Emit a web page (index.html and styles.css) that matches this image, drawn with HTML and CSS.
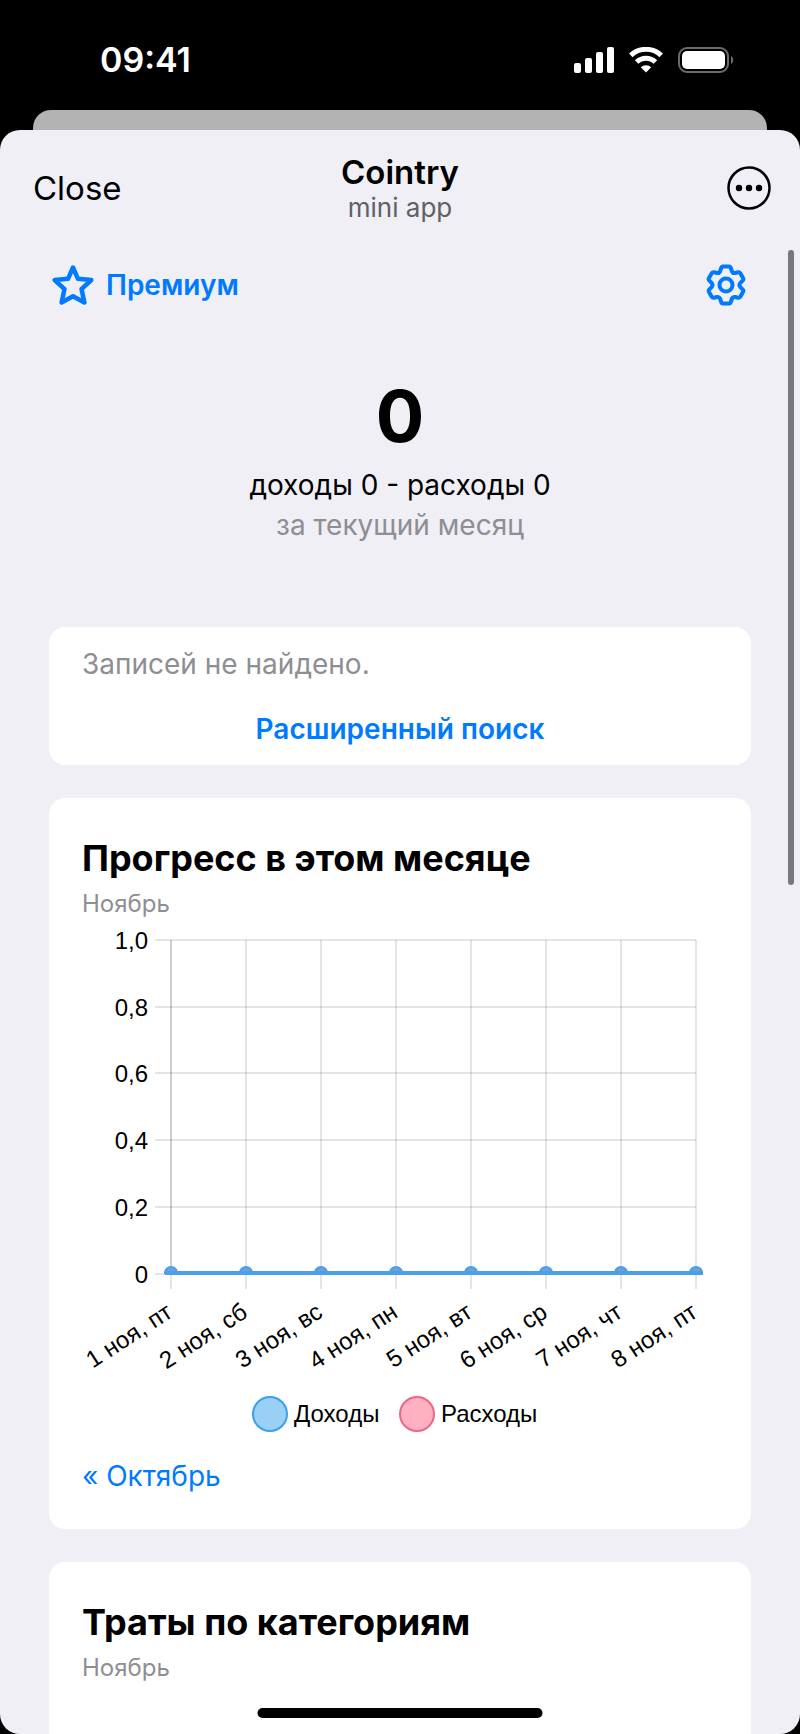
FILE: index.html
```html
<!DOCTYPE html>
<html lang="ru">
<head>
  <meta charset="UTF-8" />
  <meta name="viewport" content="width=device-width, initial-scale=1.0"/>
  <title>Cointry</title>
  <link rel="stylesheet" href="styles.css">
</head>
<body>

  <div class="status-bar">
    <span class="clock">09:41</span>
    <div class="status-icons">
      <svg width="40" height="26" viewBox="0 0 40 26" fill="#fff">
        <rect x="0" y="16" width="7" height="10" rx="2"/>
        <rect x="11" y="11" width="7" height="15" rx="2"/>
        <rect x="22" y="5" width="7" height="21" rx="2"/>
        <rect x="33" y="0" width="7" height="26" rx="2"/>
      </svg>
      <svg width="34" height="26" viewBox="0 0 34 26" fill="none" stroke="#fff" stroke-width="5">
        <path d="M1.8 8.4a22 22 0 0 1 30.4 0"/>
        <path d="M7.6 15a13.4 13.4 0 0 1 18.8 0"/>
        <path d="M17 25.5l-5.200-5.300a7.600 7.600 0 0 1 10.400 0z" fill="#fff" stroke="none"/>
      </svg>
      <svg width="56" height="26" viewBox="0 0 56 26">
        <rect x="1" y="1" width="49" height="24" rx="8" fill="none" stroke="#6b6b6b" stroke-width="2"/>
        <rect x="4" y="4" width="43" height="18" rx="5" fill="#fff"/>
        <path d="M53 9c3 1.500 3 6.500 0 8z" fill="#6b6b6b"/>
      </svg>
    </div>
  </div>

  <div class="back-sheet"></div>

  <div class="sheet">
    <header class="app-header">
      <button class="close-button" type="button">Close</button>
      <div class="app-title">
        <h1>Cointry</h1>
        <p>mini app</p>
      </div>
      <button class="more-button" type="button" aria-label="More">
        <svg width="44" height="44" viewBox="0 0 44 44">
          <circle cx="22" cy="22" r="20.500" fill="none" stroke="#000" stroke-width="2.500"/>
          <circle cx="12" cy="22" r="3.200"/>
          <circle cx="22" cy="22" r="3.200"/>
          <circle cx="32" cy="22" r="3.200"/>
        </svg>
      </button>
    </header>

    <main class="content">
      <div class="toolbar">
        <a class="premium" href="#premium">
          <svg width="42" height="42" viewBox="0 0 42 42" fill="none" stroke="currentColor" stroke-width="4.500" stroke-linejoin="round">
            <path d="M21 3.500l5 11.300 13.300 1.200-9.800 9.100 2.900 13.400L21 32.200 9.600 38.500l2.900-13.400L2.700 16 16 14.800z"/>
          </svg>
          Премиум
        </a>
        <button class="settings-button" type="button" aria-label="Настройки">
          <svg width="40" height="42" viewBox="0 0 40 42" fill="none" stroke="currentColor" stroke-width="4" stroke-linejoin="round">
            <path d="M15 4.500Q15.500 2.500 17 2.500h6Q24.500 2.500 25 4.500l1 3q1 2 3 1.500l3-.8q1.500-.3 2.300 1l2.700 4.800q.8 1.300-.2 2.400l-2.600 2.700q-1.400 1.900 0 3.800l2.600 2.700q1 1.100.2 2.400l-2.700 4.800q-.8 1.300-2.300 1l-3-.8q-2-.5-3 1.500l-1 3q-.5 2-2 2h-6q-1.500 0-2-2l-1-3q-1-2-3-1.500l-3 .8q-1.500.3-2.300-1l-2.700-4.800q-.8-1.300.2-2.400l2.600-2.700q1.400-1.900 0-3.800l-2.600-2.700q-1-1.100-.2-2.400l2.700-4.800q.8-1.300 2.300-1l3 .8q2 .5 3-1.500z"/>
            <circle cx="20" cy="21" r="6.500"/>
          </svg>
        </button>
      </div>

      <section class="balance">
        <div class="balance-total">0</div>
        <p>доходы 0 - расходы 0</p>
        <p class="muted">за текущий месяц</p>
      </section>

      <section class="card search-card">
        <p class="muted">Записей не найдено.</p>
        <a class="search-link" href="#search">Расширенный поиск</a>
      </section>

      <section class="card">
        <h2>Прогресс в этом месяце</h2>
        <p class="month">Ноябрь</p>
        <svg class="chart" viewBox="0 0 636 516" role="img" aria-label="Доходы и расходы по дням">
          <g class="grid">
            <path d="M73 16H614M73 83H614M73 149H614M73 216H614M73 283H614M73 350H614"/>
            <path d="M89 16V365M164 16V365M239 16V365M314 16V365M389 16V365M464 16V365M539 16V365M614 16V365"/>
            <path d="M89 16V350"/>
          </g>
          <g class="points">
            <path d="M83 349a6 6 0 0 1 12 0zM158 349a6 6 0 0 1 12 0zM233 349a6 6 0 0 1 12 0zM308 349a6 6 0 0 1 12 0zM383 349a6 6 0 0 1 12 0zM458 349a6 6 0 0 1 12 0zM533 349a6 6 0 0 1 12 0zM608 349a6 6 0 0 1 12 0z"/>
          </g>
          <path class="line" d="M83 349H621"/>
          <g class="labels-y">
            <text x="66" y="25">1,0</text>
            <text x="66" y="92">0,8</text>
            <text x="66" y="158">0,6</text>
            <text x="66" y="225">0,4</text>
            <text x="66" y="292">0,2</text>
            <text x="66" y="359">0</text>
          </g>
          <g class="labels-x">
            <text transform="translate(92 392) rotate(-33)">1 ноя, пт</text>
            <text transform="translate(167 392) rotate(-33)">2 ноя, сб</text>
            <text transform="translate(242 392) rotate(-33)">3 ноя, вс</text>
            <text transform="translate(317 392) rotate(-33)">4 ноя, пн</text>
            <text transform="translate(392 392) rotate(-33)">5 ноя, вт</text>
            <text transform="translate(467 392) rotate(-33)">6 ноя, ср</text>
            <text transform="translate(542 392) rotate(-33)">7 ноя, чт</text>
            <text transform="translate(617 392) rotate(-33)">8 ноя, пт</text>
          </g>
          <g class="legend">
            <circle class="income" cx="188" cy="490" r="17"/>
            <text x="212" y="498">Доходы</text>
            <circle class="expense" cx="335" cy="490" r="17"/>
            <text x="359" y="498">Расходы</text>
          </g>
        </svg>
        <a class="prev-month" href="#october">« Октябрь</a>
      </section>

      <section class="card last-card">
        <h2>Траты по категориям</h2>
        <p class="month">Ноябрь</p>
      </section>
    </main>

    <div class="scrollbar"></div>
    <div class="home-indicator"></div>
  </div>

</body>
</html>
```
FILE: styles.css
```css
* {
  box-sizing: border-box;
}

body {
  font-family: Inter, 'Liberation Sans', sans-serif;
  font-size: 28px;
  line-height: 40px;
  margin: 0;
  min-height: 100vh;
  display: flex;
  flex-direction: column;
  background-color: #000;
  color: #000;
}

h1, h2, p {
  margin: 0;
}

a {
  color: #007aff;
  text-decoration: none;
}

button {
  padding: 0;
  border: none;
  background: none;
  font: inherit;
  color: inherit;
  cursor: pointer;
}

svg {
  display: block;
}

.status-bar {
  display: flex;
  justify-content: space-between;
  align-items: center;
  height: 110px;
  padding: 10px 66px 0 100px;
  color: #fff;
}

.clock {
  font-size: 34px;
  font-weight: 600;
}

.status-icons {
  display: flex;
  gap: 15px;
}

.back-sheet {
  height: 20px;
  margin: 0 33px;
  border-radius: 18px 18px 0 0;
  background-color: #b4b3b3;
}

.sheet {
  position: relative;
  flex: 1;
  display: flex;
  flex-direction: column;
  border-radius: 20px;
  background-color: #efeff5;
}

.app-header {
  display: grid;
  grid-template-columns: 1fr auto 1fr;
  align-items: center;
  height: 116px;
  padding: 0 29px;
}

.close-button {
  justify-self: start;
  padding-left: 4px;
  font-size: 33px;
}

.app-title {
  text-align: center;
}

.app-title h1 {
  font-size: 33px;
  font-weight: 600;
  line-height: 40px;
}

.app-title p {
  font-size: 26px;
  line-height: 32px;
  color: #606065;
}

.more-button {
  justify-self: end;
}

.content {
  flex: 1;
  display: flex;
  flex-direction: column;
  gap: 33px;
  padding: 18px 49px 0;
}

.toolbar {
  display: flex;
  justify-content: space-between;
  align-items: center;
  height: 42px;
  padding: 0 5px 0 3px;
}

.premium {
  display: flex;
  align-items: center;
  gap: 12px;
  font-weight: 600;
}

.settings-button {
  color: #007aff;
}

.balance {
  height: 255px;
  padding-top: 32px;
  text-align: center;
}

.balance-total {
  margin-bottom: 4px;
  font-size: 72px;
  font-weight: 700;
  line-height: 90px;
}

.muted {
  color: #8e8e93;
}

.card {
  padding: 40px 33px 33px;
  border-radius: 16px;
  background-color: #fff;
}

.search-card {
  display: flex;
  flex-direction: column;
  gap: 25px;
  padding: 17px 33px 16px;
}

.search-link {
  font-weight: 600;
  text-align: center;
}

.card h2 {
  font-size: 36px;
  font-weight: 700;
  line-height: 40px;
}

.month {
  margin-top: 6px;
  font-size: 24px;
  line-height: 40px;
  color: #8e8e93;
}

.chart {
  width: 100%;
  font-family: 'Liberation Sans', Arial, sans-serif;
  font-size: 24px;
}

.grid {
  fill: none;
  stroke: rgba(0, 0, 0, 0.1);
  stroke-width: 2;
}

.points {
  fill: #6f9fe0;
  stroke: #4a9fe2;
  stroke-width: 2;
}

.line {
  fill: none;
  stroke: #4a9fe5;
  stroke-width: 4;
}

.labels-y,
.labels-x {
  text-anchor: end;
}

.income {
  fill: #9ad0f5;
  stroke: #36a2eb;
  stroke-width: 2;
}

.expense {
  fill: #ffb1c1;
  stroke: #ee6688;
  stroke-width: 2;
}

.prev-month {
  display: block;
  margin-top: 16px;
}

.last-card {
  flex: 1;
  border-radius: 16px 16px 0 0;
}

.scrollbar {
  position: absolute;
  top: 120px;
  right: 6px;
  width: 6px;
  height: 635px;
  border-radius: 3px;
  background-color: #77777c;
}

.home-indicator {
  position: absolute;
  bottom: 16px;
  left: 50%;
  width: 285px;
  height: 10px;
  border-radius: 5px;
  background-color: #000;
  transform: translateX(-50%);
}
```
